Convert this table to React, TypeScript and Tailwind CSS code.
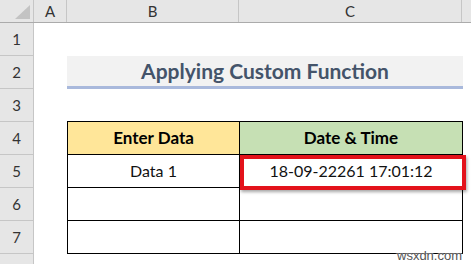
import React from 'react';

// Excel-like sheet: columns A..C, rows 1..7
const ROWS = [1, 2, 3, 4, 5, 6, 7, 8];

const font = { fontFamily: 'Lato, "Open Sans", sans-serif' };

const RowHead: React.FC<{ n: number }> = ({ n }) => (
    <div className="w-[34px] shrink-0 h-full bg-[#e6e6e6] border-r border-b border-[#c6c6c6] flex items-center justify-center text-[15px] text-[#333]">
        {n < 8 ? n : null}
    </div>
);

const App: React.FC = () => {
    return (
        <div className="w-[471px] h-[264px] bg-white overflow-hidden relative" style={font}>
            {/* column headers */}
            <div className="flex h-[23px] bg-[#e6e6e6] border-b border-[#ababab] text-[15px] text-[#333]">
                <div className="w-[34px] shrink-0 border-r border-[#c6c6c6] flex items-end justify-end pr-[3px] pb-[3px]">
                    <svg width="15" height="14" viewBox="0 0 15 14">
                        <polygon points="15,0 15,14 0,14" fill="#c3c3c3" />
                    </svg>
                </div>
                <div className="w-[33px] shrink-0 border-r border-[#c6c6c6] flex items-center justify-center">A</div>
                <div className="w-[172px] shrink-0 border-r border-[#c6c6c6] flex items-center justify-center">B</div>
                <div className="w-[223px] shrink-0 border-r border-[#c6c6c6] flex items-center justify-center">C</div>
                <div className="flex-1" />
            </div>

            {ROWS.map((n) => (
                <div key={n} className="flex h-[33px]">
                    <RowHead n={n} />
                    <div className="w-[33px] shrink-0" />
                    {n === 2 && (
                        <div className="w-[396px] shrink-0 bg-[#f2f2f2] border-b-[3px] border-[#a9b9dc] flex items-center justify-center text-[21px] font-bold text-[#44546a]">
                            Applying Custom Function
                        </div>
                    )}
                    {n === 3 && (
                        <>
                            <div className="w-[172px] shrink-0 border-b border-black" />
                            <div className="w-[224px] shrink-0 border-b border-black" />
                        </>
                    )}
                    {n === 4 && (
                        <>
                            <div className="w-[172px] shrink-0 bg-[#ffe699] border-l border-b border-black flex items-center justify-center text-[17px] font-bold text-black">
                                Enter Data
                            </div>
                            <div className="w-[224px] shrink-0 bg-[#c6e0b4] border-l border-r border-b border-black flex items-center justify-center text-[17px] font-bold text-black">
                                Date &amp; Time
                            </div>
                        </>
                    )}
                    {n === 5 && (
                        <>
                            <div className="w-[172px] shrink-0 border-l border-b border-black flex items-center justify-center text-[16px] text-[#111]">
                                Data 1
                            </div>
                            <div className="relative w-[224px] shrink-0 border-l border-r border-b border-black flex items-center justify-center text-[16px] text-[#111]">
                                18-09-22261 17:01:12
                                <div className="absolute left-[0px] top-[0px] w-[226px] h-[35px] border-4 border-[#e3121b] shadow-[1px_2px_3px_rgba(0,0,0,0.35)]" />
                            </div>
                        </>
                    )}
                    {(n === 6 || n === 7) && (
                        <>
                            <div className="w-[172px] shrink-0 border-l border-b border-black" />
                            <div className="w-[224px] shrink-0 border-l border-r border-b border-black" />
                        </>
                    )}
                </div>
            ))}

            {/* watermark */}
            <div
                className="absolute left-[397px] top-[249px] text-[13px] text-[#555] leading-none"
                style={{ fontFamily: '"Liberation Sans", Arial, sans-serif', textShadow: '0 0 2px #fff, 0 0 2px #fff' }}
            >
                wsxdn.com
            </div>
        </div>
    );
};

export default App;
